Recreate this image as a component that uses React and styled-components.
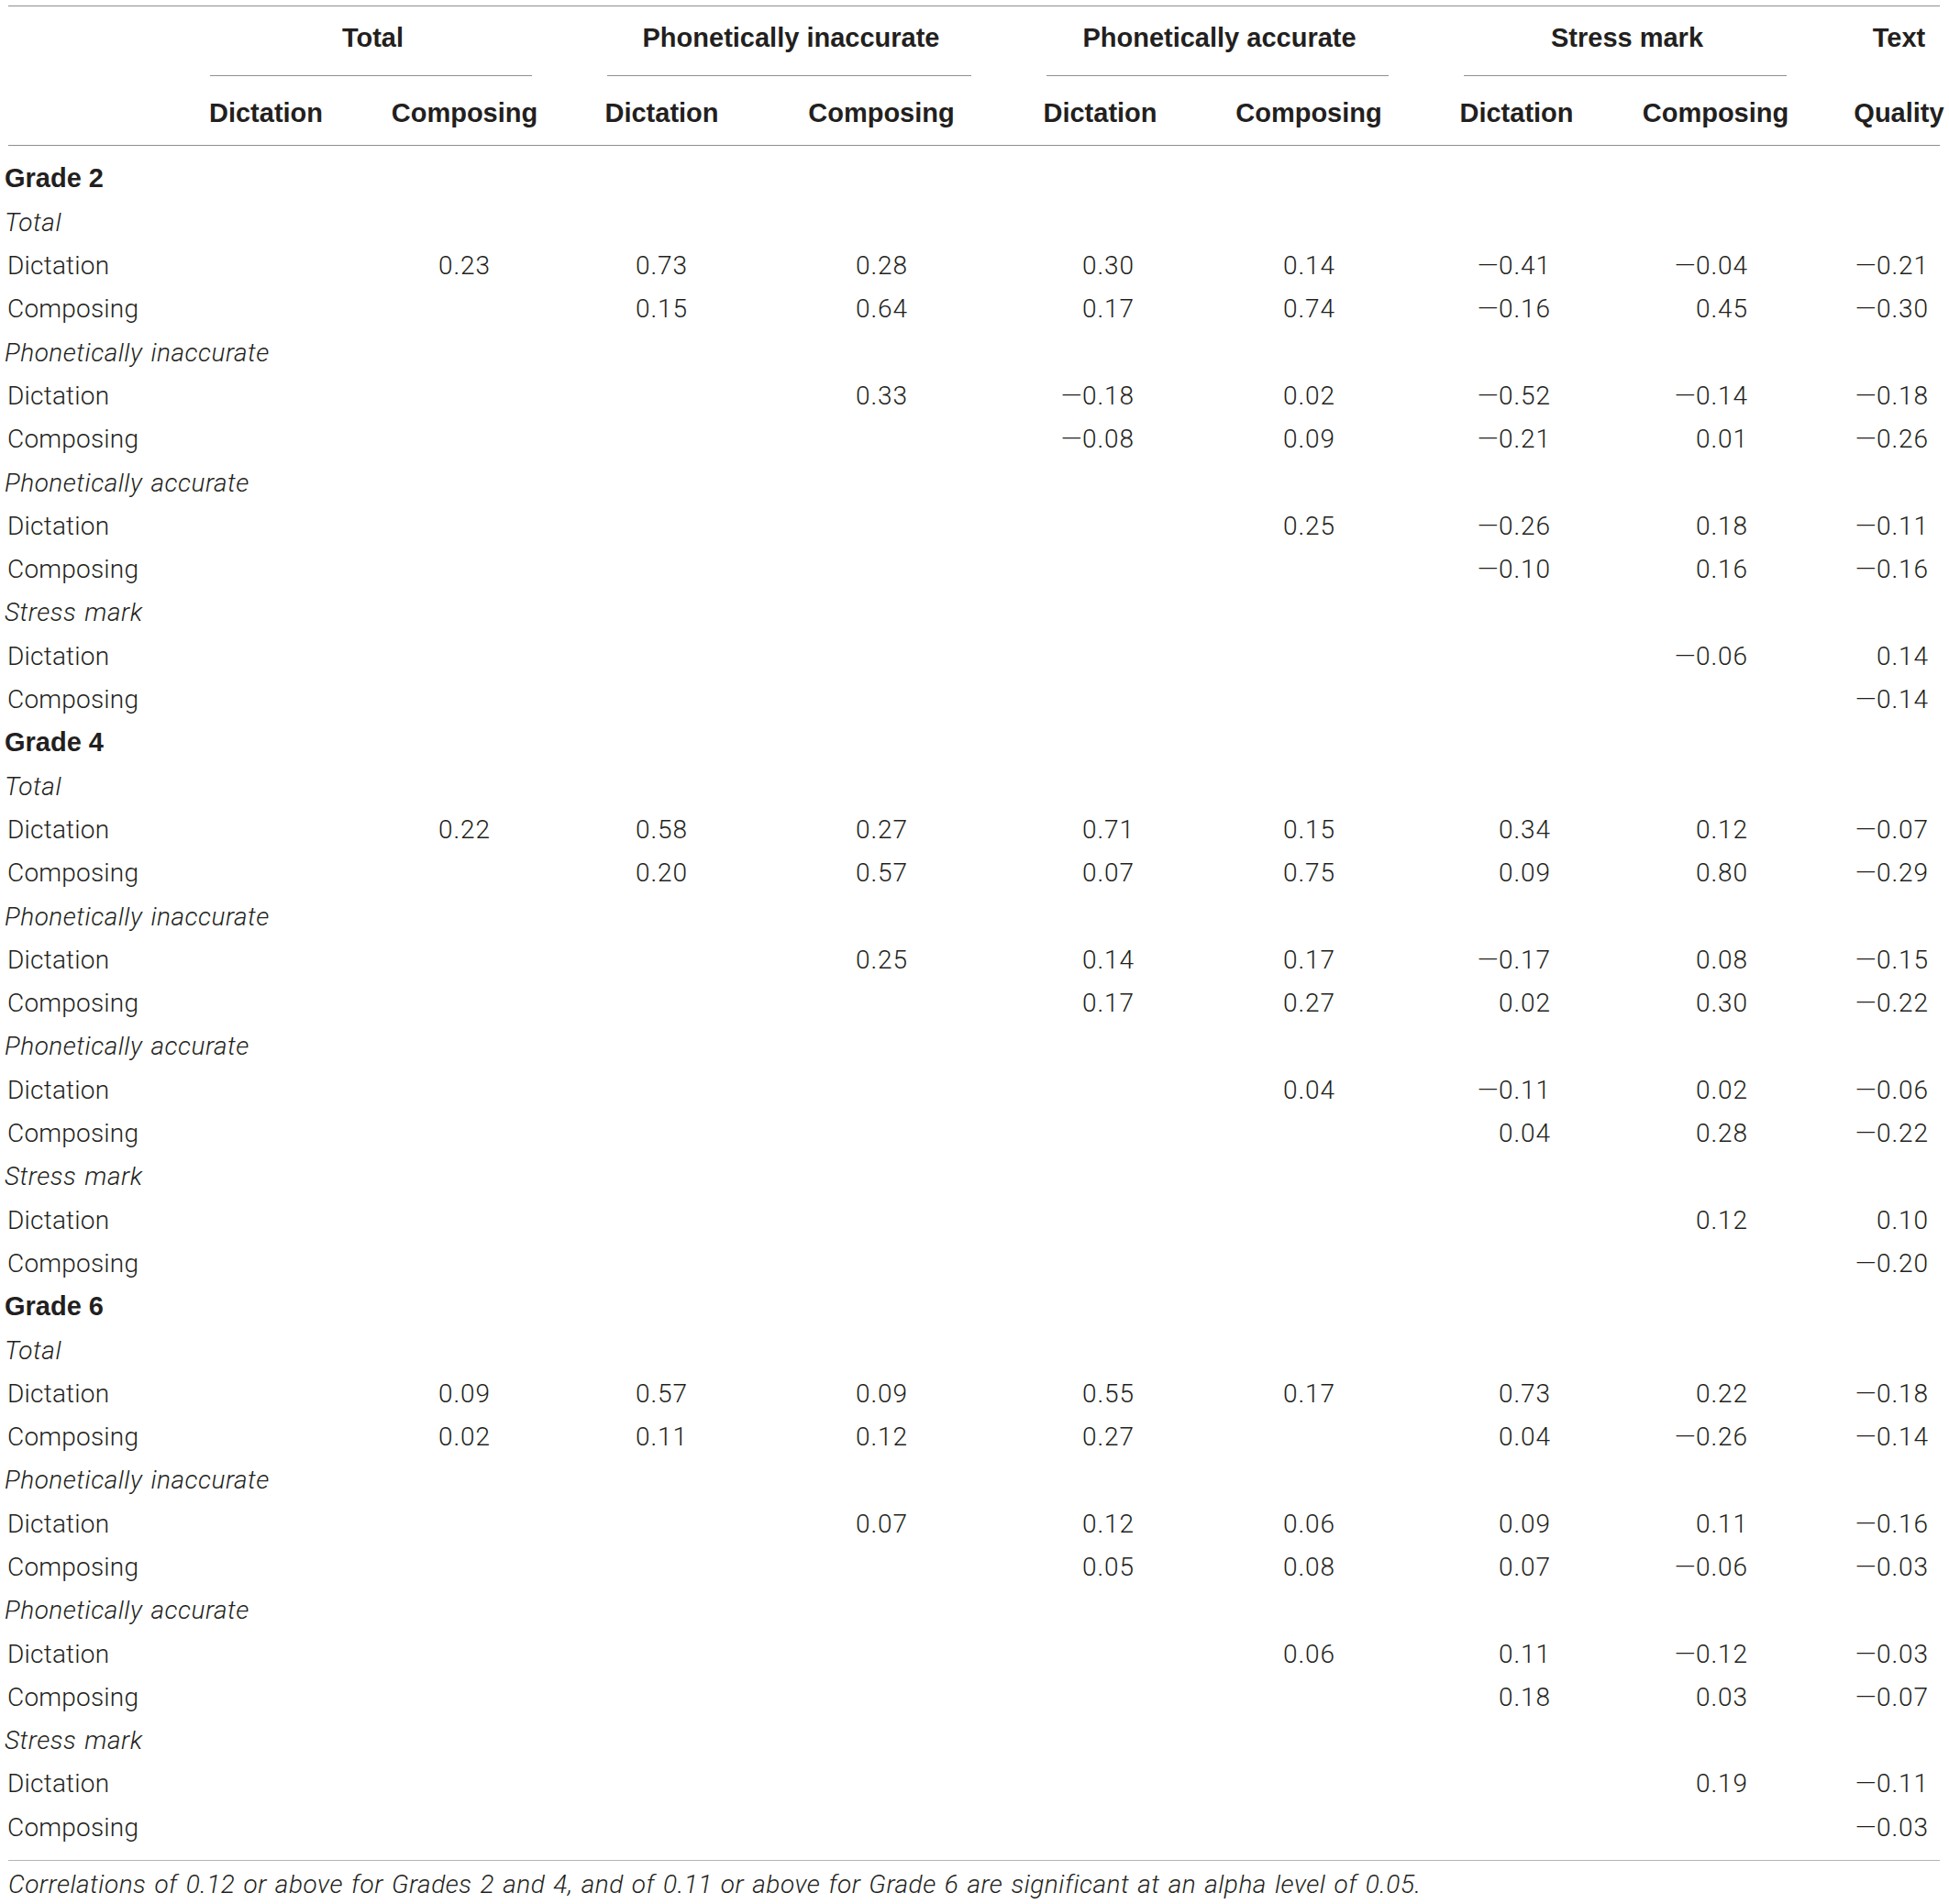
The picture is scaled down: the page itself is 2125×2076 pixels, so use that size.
import React from "react";
import styled, { createGlobalStyle } from "styled-components";

const COLS = "185px 200px 233px 197px 282px 195px 260px 193px 241px 126px";
const INK = "#231f20";
const ROW_H = 47.3;

const Global = createGlobalStyle`
  html, body { margin: 0; padding: 0; background: #ffffff; }
  body { font-family: Roboto, "Liberation Sans", Arial, sans-serif; color: ${INK}; }
`;

const Page = styled.div`
  width: 2112px;
  padding: 6px 8px 0 5px;
`;

const Rule = styled.div`
  height: 1px;
  margin: 0 2px 0 4px;
  background: ${(p) => p.$color || "#8f8f8f"};
`;

const HeadRow = styled.div`
  display: grid;
  grid-template-columns: ${COLS};
`;

const GroupHead = styled.div`
  grid-column: span ${(p) => p.$span || 1};
  display: flex;
  flex-direction: column;
  height: 76px;
  padding-left: ${(p) => p.$pl || 0}px;
`;

const GroupTitle = styled.div`
  flex: 1;
  display: flex;
  align-items: center;
  justify-content: center;
  padding-bottom: 7px;
  font-family: "Liberation Sans", Arial, sans-serif;
  font-weight: 700;
  font-size: 29px;
  white-space: nowrap;
`;

const Spanner = styled.div`
  height: 1px;
  margin: 0 43px 0 39px;
  background: ${(p) => (p.$hidden ? "transparent" : "#8f8f8f")};
`;

const SubHead = styled.div`
  height: 75px;
  padding-top: 5px;
  padding-left: ${(p) => p.$pl || 0}px;
  box-sizing: border-box;
  display: flex;
  align-items: center;
  justify-content: center;
  font-family: "Liberation Sans", Arial, sans-serif;
  font-weight: 700;
  font-size: 29px;
  white-space: nowrap;
`;

const Body = styled.div`
  padding: 12.35px 0 12px;
`;

const GradeRow = styled.div`
  height: ${ROW_H}px;
  display: flex;
  align-items: center;
  font-family: "Liberation Sans", Arial, sans-serif;
  font-weight: 700;
  font-size: 29px;
  white-space: nowrap;
`;

const SectionRow = styled.div`
  height: ${ROW_H}px;
  display: flex;
  align-items: center;
  padding-left: 0;
  font-style: italic;
  font-weight: 300;
  font-size: 28px;
  letter-spacing: 0.5px;
  word-spacing: 1.8px;
  white-space: nowrap;
`;

const DataRow = styled.div`
  display: grid;
  grid-template-columns: ${COLS};
  height: ${ROW_H}px;
  align-items: center;
  font-weight: 300;
  font-size: 28px;
`;

const RowLabel = styled.div`
  padding-left: 3px;
  letter-spacing: 0.2px;
  white-space: nowrap;
`;

const Cell = styled.div`
  display: flex;
  justify-content: flex-end;
  padding-right: ${(p) => p.$pr}px;
  white-space: nowrap;
`;

const Num = styled.span`
  letter-spacing: 0.9px;
  margin-right: -0.9px;
`;

const Sign = styled.span`
  display: inline-block;
  letter-spacing: 0;
  margin-right: 2px;
  transform: scaleX(1.42);
  transform-origin: 60% 50%;
`;

const Footnote = styled.div`
  height: 52px;
  display: flex;
  align-items: center;
  padding-left: 4px;
  font-style: italic;
  font-weight: 300;
  font-size: 28px;
  letter-spacing: 0.5px;
  word-spacing: 1.8px;
  white-space: nowrap;
`;

// padding-right per data column (col1..col9)
const PR = [60, 89, 71, 113, 61, 102, 60, 86, 15];

const GROUPS = [
  { title: "Total", span: 2 },
  { title: "Phonetically inaccurate", span: 2 },
  { title: "Phonetically accurate", span: 2 },
  { title: "Stress mark", span: 2 },
];

const SUBS = [
  "Dictation", "Composing", "Dictation", "Composing",
  "Dictation", "Composing", "Dictation", "Composing",
];

const M = "\u2013";

const grades = [
  {
    name: "Grade 2",
    sections: [
      ["Total", [
        ["Dictation", ["", "0.23", "0.73", "0.28", "0.30", "0.14", M + "0.41", M + "0.04", M + "0.21"]],
        ["Composing", ["", "", "0.15", "0.64", "0.17", "0.74", M + "0.16", "0.45", M + "0.30"]],
      ]],
      ["Phonetically inaccurate", [
        ["Dictation", ["", "", "", "0.33", M + "0.18", "0.02", M + "0.52", M + "0.14", M + "0.18"]],
        ["Composing", ["", "", "", "", M + "0.08", "0.09", M + "0.21", "0.01", M + "0.26"]],
      ]],
      ["Phonetically accurate", [
        ["Dictation", ["", "", "", "", "", "0.25", M + "0.26", "0.18", M + "0.11"]],
        ["Composing", ["", "", "", "", "", "", M + "0.10", "0.16", M + "0.16"]],
      ]],
      ["Stress mark", [
        ["Dictation", ["", "", "", "", "", "", "", M + "0.06", "0.14"]],
        ["Composing", ["", "", "", "", "", "", "", "", M + "0.14"]],
      ]],
    ],
  },
  {
    name: "Grade 4",
    sections: [
      ["Total", [
        ["Dictation", ["", "0.22", "0.58", "0.27", "0.71", "0.15", "0.34", "0.12", M + "0.07"]],
        ["Composing", ["", "", "0.20", "0.57", "0.07", "0.75", "0.09", "0.80", M + "0.29"]],
      ]],
      ["Phonetically inaccurate", [
        ["Dictation", ["", "", "", "0.25", "0.14", "0.17", M + "0.17", "0.08", M + "0.15"]],
        ["Composing", ["", "", "", "", "0.17", "0.27", "0.02", "0.30", M + "0.22"]],
      ]],
      ["Phonetically accurate", [
        ["Dictation", ["", "", "", "", "", "0.04", M + "0.11", "0.02", M + "0.06"]],
        ["Composing", ["", "", "", "", "", "", "0.04", "0.28", M + "0.22"]],
      ]],
      ["Stress mark", [
        ["Dictation", ["", "", "", "", "", "", "", "0.12", "0.10"]],
        ["Composing", ["", "", "", "", "", "", "", "", M + "0.20"]],
      ]],
    ],
  },
  {
    name: "Grade 6",
    sections: [
      ["Total", [
        ["Dictation", ["", "0.09", "0.57", "0.09", "0.55", "0.17", "0.73", "0.22", M + "0.18"]],
        ["Composing", ["", "0.02", "0.11", "0.12", "0.27", "", "0.04", M + "0.26", M + "0.14"]],
      ]],
      ["Phonetically inaccurate", [
        ["Dictation", ["", "", "", "0.07", "0.12", "0.06", "0.09", "0.11", M + "0.16"]],
        ["Composing", ["", "", "", "", "0.05", "0.08", "0.07", M + "0.06", M + "0.03"]],
      ]],
      ["Phonetically accurate", [
        ["Dictation", ["", "", "", "", "", "0.06", "0.11", M + "0.12", M + "0.03"]],
        ["Composing", ["", "", "", "", "", "", "0.18", "0.03", M + "0.07"]],
      ]],
      ["Stress mark", [
        ["Dictation", ["", "", "", "", "", "", "", "0.19", M + "0.11"]],
        ["Composing", ["", "", "", "", "", "", "", "", M + "0.03"]],
      ]],
    ],
  },
];

function Value({ v }) {
  if (!v) return null;
  const neg = v.startsWith(M);
  return (
    <Num>
      {neg && <Sign>{M}</Sign>}
      {neg ? v.slice(1) : v}
    </Num>
  );
}

export default function App() {
  return (
    <Page>
      <Global />
      <Rule />
      <HeadRow>
        <GroupHead />
        {GROUPS.map((g) => (
          <GroupHead key={g.title} $span={g.span}>
            <GroupTitle>{g.title}</GroupTitle>
            <Spanner />
          </GroupHead>
        ))}
        <GroupHead $pl={33}>
          <GroupTitle>Text</GroupTitle>
          <Spanner $hidden />
        </GroupHead>
      </HeadRow>
      <HeadRow>
        <SubHead />
        {SUBS.map((s, i) => (
          <SubHead key={i}>{s}</SubHead>
        ))}
        <SubHead $pl={33}>Quality</SubHead>
      </HeadRow>
      <Rule />
      <Body>
        {grades.map((g) => (
          <React.Fragment key={g.name}>
            <GradeRow>{g.name}</GradeRow>
            {g.sections.map(([sec, rows]) => (
              <React.Fragment key={sec}>
                <SectionRow>{sec}</SectionRow>
                {rows.map(([label, vals]) => (
                  <DataRow key={label}>
                    <RowLabel>{label}</RowLabel>
                    {vals.map((v, i) => (
                      <Cell key={i} $pr={PR[i]}>
                        <Value v={v} />
                      </Cell>
                    ))}
                  </DataRow>
                ))}
              </React.Fragment>
            ))}
          </React.Fragment>
        ))}
      </Body>
      <Rule $color="#b5b5b5" />
      <Footnote>
        Correlations of 0.12 or above for Grades 2 and 4, and of 0.11 or above for Grade 6 are significant at an alpha level of 0.05.
      </Footnote>
    </Page>
  );
}
